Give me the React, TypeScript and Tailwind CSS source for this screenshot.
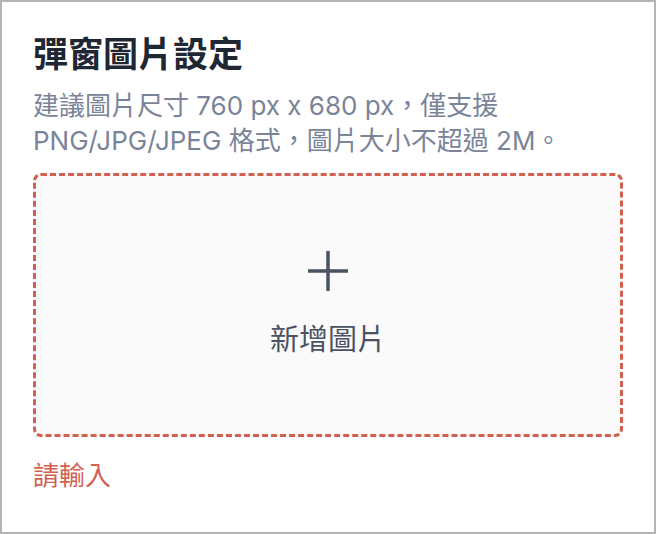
import React from 'react'

const font = { fontFamily: 'Inter, "Noto Sans CJK TC", sans-serif' }

function PlusIcon() {
  return (
    <svg width="42" height="42" viewBox="0 0 42 42" className="text-[#4a5263]">
      <path d="M21 1v40M1 21h40" stroke="currentColor" strokeWidth="3.5" fill="none" />
    </svg>
  )
}

export default function App() {
  return (
    <div
      className="w-[656px] h-[534px] border-2 border-[#b4b4b4] bg-white px-[31px] pt-[28px]"
      style={font}
    >
      <h1 className="text-[35px] leading-[48px] font-bold text-[#1f2733]">彈窗圖片設定</h1>
      <p className="mt-[10px] text-[26px] leading-[35px] text-[#7a8499]">
        建議圖片尺寸 760 px x 680 px，僅支援 PNG/JPG/JPEG 格式，圖片大小不超過 2M。
      </p>
      <button className="mt-[15px] w-full h-[264px] rounded-[8px] border-[3px] border-dashed border-[#d2604f] bg-[#fafafa] flex flex-col items-center justify-center">
        <PlusIcon />
        <span className="mt-[28px] text-[29px] leading-[40px] text-[#4a5263]">新增圖片</span>
      </button>
      <div className="mt-[21px] text-[26px] leading-[35px] text-[#d2604f]">請輸入</div>
    </div>
  )
}
